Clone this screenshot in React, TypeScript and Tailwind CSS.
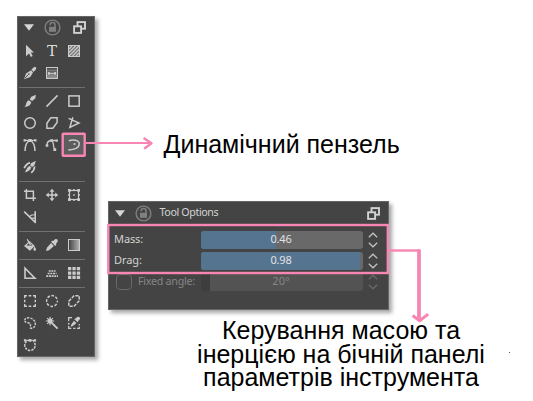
import type { ReactNode } from 'react';

function Icon({ children }: { children?: ReactNode }) {
  return (
    <svg viewBox="0 0 16 16" className="size-4" fill="none" stroke="#cbcbcb" strokeWidth="1.3">
      {children}
    </svg>
  );
}

const F = { fill: '#cbcbcb', stroke: 'none' };

const select = <Icon><path {...F} d="M4 1.8 12 9.6H8.9l1.8 3.5-1.9.9L7.1 10.4 4 13.2Z" /></Icon>;
const text = (
  <span className="font-['DejaVu_Serif',serif] text-[15px] leading-4 text-[#dcdcdc]">T</span>
);
const pattern = (
  <Icon>
    <rect x="2.5" y="2.5" width="11" height="11" fill="#777" strokeWidth="1" />
    <path strokeWidth="1.1" d="M3 6l3-3M3 9.5 9.5 3M3 13 13 3M6.5 13 13 6.5M10 13l3-3" />
  </Icon>
);
const calligraphy = (
  <Icon>
    <path {...F} d="M2 14.2 4 8.4 9 5.2 11 7.4 8.2 12Z" />
    <path {...F} d="M9.4 4.6 12.4 1.8 14.3 2.6 13.9 4.6 11.6 6.9Z" />
    <path stroke="#444" strokeWidth=".9" d="M2.9 13.2 6.4 9.5" />
    <circle cx="6.9" cy="9" r=".8" fill="#444" stroke="none" />
  </Icon>
);
const gradientEdit = (
  <Icon>
    <defs>
      <linearGradient id="ge" x1="0" x2="0" y1="0" y2="1">
        <stop offset="0" stopColor="#444" /><stop offset="1" stopColor="#9c9c9c" />
      </linearGradient>
    </defs>
    <rect x="2.5" y="2.5" width="11" height="11" fill="url(#ge)" strokeWidth="1" />
    <path strokeWidth=".9" stroke="#8a8a8a" d="M3 5.2h10M3 11h10" />
    <path strokeWidth="1" d="M5 8.4h6" />
    <path {...F} d="M4 7h1.7v2.8H4zM10.3 7H12v2.8h-1.7z" />
  </Icon>
);
const brush = (
  <Icon>
    <path {...F} d="M9.3 3.7 13.8 1.8 13.4 5.2 10.2 8.1 7.7 6.4Z" />
    <path {...F} d="M6.8 7.2 9.3 9.1C9 12 6.6 13.7 2.4 14 4.7 12.3 3.5 8.6 6.8 7.2Z" />
  </Icon>
);
const line = <Icon><path strokeWidth="1.5" d="M2.5 13.6 13.6 2.4" /></Icon>;
const rect = <Icon><rect x="2.9" y="2.9" width="10.3" height="10.3" strokeWidth="1.5" /></Icon>;
const ellipse = <Icon><circle cx="8" cy="8" r="5.3" strokeWidth="1.5" /></Icon>;
const polygon = <Icon><path strokeWidth="1.5" d="M2.9 8.2 6.8 2.8h6.3v4.6l-4.3 5.8H2.9Z" /></Icon>;
const polyline = <Icon><path strokeWidth="1.5" d="M6.8 2.3 3.9 12.4 13 8 2.6 3.4" /></Icon>;
const bezier = (
  <Icon>
    <path strokeWidth="1.2" d="M2 3.4h12" />
    <path strokeWidth="1.5" d="M3 14C3.2 7 5 4.5 8 3.6c3 .9 4.8 3.4 5 10.4" />
    <path {...F} d="M6.3 1.9h3.4v3H6.3zM1.5 2.2h2.4v2.4H1.5zM12.1 2.2h2.4v2.4h-2.4z" />
  </Icon>
);
const freePath = (
  <Icon>
    <path strokeWidth="1.3" d="M3 8C3 5 4.6 3.8 7 3.5h5.6M8.2 3.8c1.6 2 .8 5 2.2 8.2" />
    <path {...F} d="M1.7 7.2h2.6v2.5H1.7zM9.4 11.3h2.8v2.6H9.4zM6.2 2.3h2.6v2.5H6.2zM11.6 2.5h2.3v2.3h-2.3z" />
  </Icon>
);
const dynamic = (
  <Icon>
    <path strokeWidth="1.5" d="M2.8 3.7C7 2.2 13.4 3 13.3 7c-.2 3.6-5.1 5.6-11 6" />
    <circle cx="8.4" cy="7" r="1.1" {...F} />
  </Icon>
);
const multiBrush = (
  <Icon>
    <path {...F} d="m9 4.2 4.8-2.4-1.3 4.4-2.4 1.8-2-1.6Z" />
    <path {...F} d="m7.6 7 1.8 1.6c-1 2.4-3.4 4.4-6.6 5 1.2-1.6 1.8-5.4 4.8-6.6Z" />
    <path strokeWidth="1.7" d="M2.2 9.3C3.3 6.6 5 4.6 8 3.6M9.2 13.8c2.4-1.7 3.2-3.8 3.4-6.3" />
    <path stroke="#444" strokeWidth=".9" d="m2.8 10.4 3.3-3.6M7.6 13.3l2.9-3.9" />
  </Icon>
);
const crop = <Icon><path strokeWidth="1.5" d="M4.4 1.9v9.3h9.5M2 4.2h9.4v9.8" /></Icon>;
const move = (
  <Icon>
    <path strokeWidth="1.5" d="M8 3v10M3 8h10" />
    <path {...F} d="m8 1.8 2.5 3h-5ZM8 14.2l2.5-3h-5ZM1.8 8l3-2.5v5ZM14.2 8l-3-2.5v5Z" />
  </Icon>
);
const transform = (
  <Icon>
    <rect x="3.5" y="3.5" width="9" height="9" strokeWidth="1.2" />
    <path {...F} d="M2 2h2.7v2.7H2zM11.3 2H14v2.7h-2.7zM2 11.3h2.7V14H2zM11.3 11.3H14V14h-2.7zM7.2 2h1.6v2H7.2zM7.2 12h1.6v2H7.2zM2 7.2h2v1.6H2zM12 7.2h2v1.6h-2zM7.2 7.2h1.6v1.6H7.2z" />
  </Icon>
);
const assistant = (
  <Icon>
    <path strokeWidth="1.6" d="M2.2 2.6 13.8 14M13.2 2.2v11.3" />
    <path strokeWidth="1.2" d="M7.4 7.8C8.6 6 10.8 5.6 13 5.8M8.6 9.2H13" />
  </Icon>
);
const fill = (
  <Icon>
    <path {...F} d="M2 9 7.5 4l5.3 5.1-4.9 4.7Z" />
    <path fill="#444" stroke="none" d="m4.4 8.4 3.2-2.8 2.9 2.8Z" />
    <path strokeWidth="1.3" d="M5.2 2.2 8.5 8" />
    <path {...F} d="M12.6 9.3c.7 1.4 1.4 2.2 1.4 3.2 0 1.8-2.6 1.8-2.6 0 0-.9.7-1.8 1.2-3.2Z" />
  </Icon>
);
const picker = (
  <Icon>
    <path {...F} d="M9 4.2 11.3 2.1q2.7-.5 2.5 2.3l-2 2.5.7.9-1.2 1.2L7.1 4.8l1.1-1.3Z" />
    <path {...F} d="M7.1 6.1 9.9 8.9 5.1 13.2 2 14l.9-3.3Z" />
  </Icon>
);
const gradient = (
  <Icon>
    <defs>
      <linearGradient id="gr"><stop offset="0" stopColor="#404040" /><stop offset="1" stopColor="#b4b4b4" /></linearGradient>
    </defs>
    <rect x="2.5" y="2.5" width="11" height="11" fill="url(#gr)" strokeWidth="1" />
  </Icon>
);
const measure = <Icon><path strokeWidth="1.6" d="M3 3.3v9.9h9.9Z" /></Icon>;
const perspective = (
  <Icon>
    <path strokeWidth="1.6" strokeDasharray="2 .7" d="M4.7 6h6.9M3.6 8.5h9M2.2 11.1h11.8" />
  </Icon>
);
const grid = (
  <Icon><path {...F} d="M2 2h3.3v3.3H2zM6.4 2h3.3v3.3H6.4zM10.8 2h3.3v3.3h-3.3zM2 6.4h3.3v3.3H2zM6.4 6.4h3.3v3.3H6.4zM10.8 6.4h3.3v3.3h-3.3zM2 10.8h3.3v3.3H2zM6.4 10.8h3.3v3.3H6.4zM10.8 10.8h3.3v3.3h-3.3z" /></Icon>
);
const selRect = (
  <Icon><path strokeWidth="1.4" d="M2.7 5V2.7H5M11 2.7h2.3V5M13.3 11v2.3H11M5 13.3H2.7V11M6.7 2.7h2.6M6.7 13.3h2.6M2.7 6.7v2.6M13.3 6.7v2.6" /></Icon>
);
const selEllipse = <Icon><circle cx="8" cy="8" r="5.4" strokeWidth="1.5" strokeDasharray="2.7 1.54" strokeDashoffset="1.3" /></Icon>;
const selPolygon = <Icon><path strokeWidth="1.5" strokeDasharray="3.2 1.2" d="M2.8 8.2 8 2.8h5.2v5L8 13.2H2.8Z" /></Icon>;
const selFree = (
  <Icon>
    <path
      strokeWidth="1.5"
      strokeDasharray="2.2 1.2"
      d="M2.8 5.2C2.8 3.4 4.6 2.6 6.8 2.8c3.6.3 6.6 2.8 6.5 6-.1 2.8-1.7 4.4-4.4 4.5-1 0-.8-1.6-.5-2.5C8.9 9 8 8 6 7.8 4 7.6 2.8 6.8 2.8 5.2Z"
    />
  </Icon>
);
const wand = (
  <Icon>
    <path strokeWidth="1.9" d="m7.3 7.3 6.3 6.3" />
    <path strokeWidth="1.2" d="M6 1.8v8.4M1.8 6h8.4M3.2 3.2l5.6 5.6M8.8 3.2 3.2 8.8" />
    <circle cx="6" cy="6" r="2.4" {...F} />
  </Icon>
);
const selColor = (
  <Icon>
    <path strokeWidth="1.3" d="M2.7 6V2.7H6M2.7 7.8v2M13.3 9v1.6M13.3 11.8v1.5H11M9.4 13.3H7.2M5.3 13.3H2.7V11" />
    <path {...F} d="m8.2 4 1.2-.4 2.2-1.9q2.7-.2 2.4 2.4l-1.9 2.1-.3 1.4ZM8 5.7l2.4 2.5-3.6 2.9-2.2.7.8-2.5Z" />
  </Icon>
);
const selBezier = (
  <Icon>
    <path strokeWidth="1.1" d="M2 3.4h12" />
    <path {...F} d="M1.9 2.3h2.3v2.3H1.9zM6.6 2.1h2.8v2.7H6.6zM11.8 2.3h2.3v2.3h-2.3z" />
    <path strokeWidth="1.5" strokeDasharray="2.4 1" d="M4.6 4.4C3.4 5.4 2.8 6.6 2.8 8.2c0 3 2.2 5.2 5.2 5.2s5.2-2.2 5.2-5.2c0-1.6-.6-2.8-1.8-3.8" />
  </Icon>
);

const groups: ReactNode[][] = [
  [select, text, pattern, calligraphy, gradientEdit],
  [brush, line, rect, ellipse, polygon, polyline, bezier, freePath, dynamic, multiBrush],
  [crop, move, transform, assistant],
  [fill, picker, gradient],
  [measure, perspective, grid],
  [selRect, selEllipse, selPolygon, selFree, wand, selColor, selBezier],
];

function Triangle() {
  return <svg viewBox="0 0 10 7" className="h-[7px] w-[10px]"><path fill="#d6d6d6" d="M0 .2h10L5 6.8Z" /></svg>;
}

function Lock() {
  return (
    <svg viewBox="0 0 17 17" className="size-[17px]" fill="none" stroke="#808080">
      <circle cx="8.5" cy="8.5" r="7.4" strokeWidth="1.4" />
      <rect x="5" y="7.8" width="7" height="5" fill="#808080" stroke="none" />
      <path strokeWidth="1.5" d="M6.2 6.2V5.7c0-2.8 4.8-2.8 4.8 0V8.4" />
    </svg>
  );
}

function Float() {
  return (
    <svg viewBox="0 0 13 13" className="size-[13px]" fill="#444" stroke="#d2d2d2" strokeWidth="1.9">
      <rect x="4.5" y="1.1" width="7.5" height="6.6" />
      <rect x="1.1" y="5.3" width="7" height="6.6" />
    </svg>
  );
}

function Toolbox() {
  return (
    <aside className="mt-4 ml-[17px] h-[341px] w-[78px] shrink-0 border border-[#666] bg-[#444] pl-px shadow-[3px_3px_4px_rgba(0,0,0,0.35)]">
      <header className="mb-[3px] flex h-5 items-center pl-[5px]">
        <Triangle />
        <div className="ml-[9.5px]"><Lock /></div>
        <div className="ml-3"><Float /></div>
      </header>
      {groups.map((tools, i) => (
        <section key={i} className="w-[66px]">
          {i > 0 && <div className="flex h-1.5 items-center"><div className="h-px w-full bg-[#707070]" /></div>}
          <div className="grid grid-cols-3">
            {tools.map((tool, j) => (
              <div
                key={j}
                className={`flex size-[22px] items-center justify-center ${tool === dynamic ? 'bg-[#5d5d5d]' : ''}`}
              >
                {tool}
              </div>
            ))}
          </div>
        </section>
      ))}
    </aside>
  );
}

function Spinner({ color }: { color: string }) {
  return (
    <svg viewBox="0 0 10 16" className="ml-[5px] h-4 w-[10px]" fill="none" stroke={color} strokeWidth="1.2">
      <path d="M.8 5.2 5 1.2l4.2 4M.8 10.8l4.2 4 4.2-4" />
    </svg>
  );
}

function Slider({ label, value, amount }: { label: string; value: string; amount: number }) {
  return (
    <div className="flex h-[18px] items-center">
      <span className="w-[87px] -translate-y-px tracking-[-0.1px]">{label}</span>
      <div className="relative h-[18px] w-[162px] overflow-hidden rounded-[3px] bg-[#696969]">
        <div className="h-full bg-[#547490]" style={{ width: `${amount * 100}%` }} />
        <span className="absolute inset-0 pr-[2px] text-center leading-[16px] tracking-[-0.2px] text-[#e2e2e2]">{value}</span>
      </div>
      <Spinner color="#c4c4c4" />
    </div>
  );
}

function ToolOptions() {
  return (
    <section className="ml-[13px] h-[109px] w-[281px] border border-[#666] bg-[#444] font-['Noto_Sans',sans-serif] text-[11px] text-[#d3d3d3] shadow-[3px_3px_4px_rgba(0,0,0,0.35)]">
      <header className="flex h-[22px] items-center pl-1.5">
        <Triangle />
        <div className="ml-[9.5px]"><Lock /></div>
        <h1 className="ml-2 w-[207px] -translate-y-px text-[10.7px] tracking-[-0.38px]">Tool Options</h1>
        <Float />
      </header>
      <div className="flex flex-col gap-[3px] pt-[7px] pl-[5px]">
        <Slider label="Mass:" value="0.46" amount={0.46} />
        <Slider label="Drag:" value="0.98" amount={0.98} />
        <div className="flex h-[18px] items-center text-[#858585]">
          <div className="ml-0.5 size-4 rounded-sm border border-[#686868]" />
          <span className="ml-1.5 w-[63px] -translate-y-px text-[10.7px] tracking-[-0.25px]">Fixed angle:</span>
          <div className="relative h-[18px] w-[162px] overflow-hidden rounded-[3px] bg-[#535353]">
            <div className="h-full w-[9px] bg-[#3e3e3e]" />
            <span className="absolute inset-0 pr-[2px] text-center leading-[16px]">20°</span>
          </div>
          <Spinner color="#6a6a6a" />
        </div>
      </div>
    </section>
  );
}

export default function App() {
  return (
    <main className="relative flex h-[401px] w-[533px] overflow-hidden bg-white font-['Liberation_Sans',sans-serif] text-black">
      <Toolbox />
      <div className="flex flex-col">
        <p className="mt-[130px] ml-[68.5px] h-[71px] text-[25px] leading-7 whitespace-nowrap">Динамічний пензель</p>
        <ToolOptions />
        <p className="mt-[9px] ml-[96px] w-[300px] text-center text-[25px] leading-[23.6px] whitespace-nowrap">
          Керування масою та<br />інерцією на бічній панелі<br />параметрів інструмента
        </p>
      </div>
      <svg viewBox="0 0 533 401" className="pointer-events-none absolute inset-0" fill="none" stroke="#f786b5" strokeWidth="2.4">
        <rect x="62.7" y="133.7" width="22" height="22" rx=".5" />
        <path strokeWidth="2" d="M86 143h64" />
        <path strokeWidth="2.4" strokeLinejoin="round" d="m143.5 138 8 5.2-7.3 5.6" />
        <rect x="108.3" y="225" width="279.5" height="48" />
        <path d="M389 250.5h31" />
        <path strokeWidth="3.8" d="M419 249.5v71" />
        <path strokeWidth="3" strokeLinejoin="round" d="m412.6 315.5 7 5.3 8.6-6.7" />
        <path stroke="none" fill="#555" d="M509 352h1v1h-1z" />
      </svg>
    </main>
  );
}
